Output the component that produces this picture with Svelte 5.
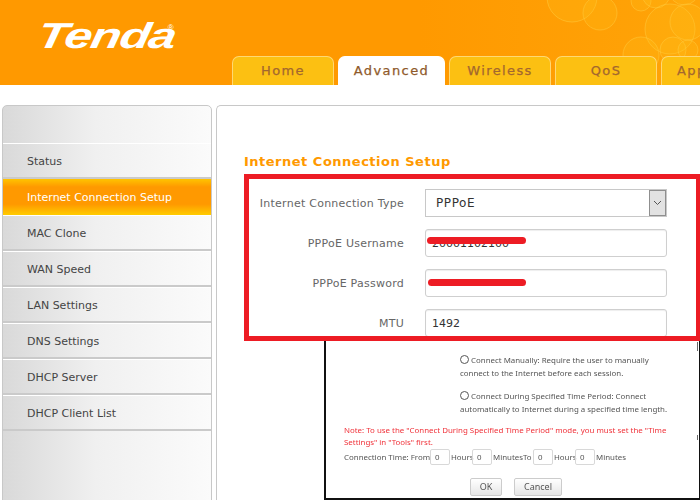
<script>
  const tabs = [
    { name: 'Home' },
    { name: 'Advanced', active: true },
    { name: 'Wireless' },
    { name: 'QoS' },
    { name: 'Application', last: true }
  ];

  const menu = [
    'Status',
    'Internet Connection Setup',
    'MAC Clone',
    'WAN Speed',
    'LAN Settings',
    'DNS Settings',
    'DHCP Server',
    'DHCP Client List'
  ];

  const bubbles = [
    [222, -3, 25],
    [250, 13, 17],
    [291, 1, 10],
    [306, -6, 14],
    [334, -10, 15],
    [320, 29, 25],
    [338, 22, 18],
    [291, 55, 18],
    [323, 50, 13],
    [338, 50, 10]
  ];
</script>

<div class="page">
  <header>
    <div class="logo"><span class="brand">Tenda</span><span class="reg">®</span></div>
    <nav>
      {#each tabs as tab}
        <div class="tab" class:active={tab.active} class:last={tab.last}>{tab.name}</div>
      {/each}
    </nav>
    <svg class="bubbles" width="350" height="85" viewBox="0 0 350 85">
      {#each bubbles as b}
        <circle cx={b[0]} cy={b[1]} r={b[2]} fill="#ffc21a" fill-opacity="0.22" stroke="#ffcb40" stroke-opacity="0.5" />
      {/each}
    </svg>
  </header>

  <div class="main">
    <aside>
      {#each menu as item, i}
        <div class="item" class:current={i === 1}>{item}</div>
      {/each}
    </aside>

    <section>
      <h2>Internet Connection Setup</h2>
      <div class="redbox">
        <div class="row">
          <span class="label">Internet Connection Type</span>
          <div class="select">
            <span class="value">PPPoE</span>
            <span class="arrow">
              <svg width="9" height="6" viewBox="0 0 9 6"><path d="M1 1l3.5 3.5L8 1" fill="none" stroke="#555" stroke-width="1" /></svg>
            </span>
          </div>
        </div>
        <div class="row">
          <span class="label">PPPoE Username</span>
          <div class="field">
            <input value="20001102100" />
            <i class="scribble one"></i>
          </div>
        </div>
        <div class="row">
          <span class="label">PPPoE Password</span>
          <div class="field">
            <input />
            <i class="scribble two"></i>
          </div>
        </div>
        <div class="row">
          <span class="label">MTU</span>
          <div class="field"><input value="1492" /></div>
        </div>
      </div>

      <div class="pasted">
        <div class="blurred">
          <div class="option">
            <p><span class="radio"></span>Connect Manually: Require the user to manually</p>
            <p>connect to the Internet before each session.</p>
          </div>
          <div class="option second">
            <p><span class="radio"></span>Connect During Specified Time Period: Connect</p>
            <p>automatically to Internet during a specified time length.</p>
          </div>
          <div class="note">
            <p>Note: To use the "Connect During Specified Time Period" mode, you must set the "Time</p>
            <p>Settings" in "Tools" first.</p>
          </div>
          <div class="time">
            <span class="t1">Connection Time: From</span><span class="mini">0</span>
            <span class="t2">Hours</span><span class="mini">0</span>
            <span class="t3">MinutesTo</span><span class="mini">0</span>
            <span class="t2">Hours</span><span class="mini">0</span>
            <span class="t4">Minutes</span>
          </div>
          <div class="buttons">
            <span class="btn ok">OK</span>
            <span class="btn cancel">Cancel</span>
          </div>
        </div>
        <i class="tick a"></i>
        <i class="tick b"></i>
      </div>
    </section>
  </div>
</div>

<style>
  :global(body) {
    margin: 0;
    background: #fff;
    overflow: hidden;
  }
  .page {
    width: 700px;
    height: 500px;
    overflow: hidden;
    font-family: "DejaVu Sans", sans-serif;
  }
  header {
    position: relative;
    display: flex;
    height: 85px;
    background: linear-gradient(90deg, #ff9900 60%, #ffa408);
    overflow: hidden;
  }
  .logo {
    width: 198px;
    flex: none;
    padding: 16px 0 0 34px;
    color: #fff;
    display: flex;
    align-items: flex-start;
    white-space: nowrap;
    height: 40px;
  }
  .brand {
    display: inline-block;
    margin-right: 34px;
    font: italic bold 36px/40px "Liberation Sans", sans-serif;
    letter-spacing: -1px;
    transform: scaleX(1.38) skewX(-8deg);
    transform-origin: 0 100%;
  }
  .reg {
    font: 8px/10px "Liberation Sans", sans-serif;
    margin-top: 7px;
  }
  nav {
    display: flex;
    align-self: flex-end;
    gap: 4px;
    position: relative;
    z-index: 1;
  }
  .tab {
    flex: none;
    box-sizing: border-box;
    width: 102px;
    height: 29px;
    border: 1px solid #ffd873;
    border-bottom: 0;
    border-radius: 7px 7px 0 0;
    background: #fcc012;
    color: #a3672f;
    font-size: 13px;
    letter-spacing: 1.4px;
    line-height: 27px;
    text-align: center;
    white-space: nowrap;
    overflow: hidden;
    -webkit-text-stroke: 0.25px;
  }
  .tab.active {
    width: 107px;
    background: #fff;
    border-color: #fff;
    color: #8f5a2b;
  }
  .tab.last {
    padding-left: 15px;
    text-align: left;
  }
  .bubbles {
    position: absolute;
    left: 350px;
    top: 0;
  }
  .main {
    display: flex;
    gap: 4px;
    padding: 20px 0 0 2px;
  }
  aside {
    flex: none;
    box-sizing: border-box;
    width: 210px;
    height: 400px;
    padding-top: 37px;
    border: 1px solid #c8c8c8;
    border-radius: 5px 5px 0 0;
    background: linear-gradient(90deg, #d9d9d9, #f0f0f0 45%, #fbfbfb);
  }
  .item {
    box-sizing: border-box;
    height: 36px;
    padding-left: 24px;
    border-top: 1px solid #fff;
    border-bottom: 2px solid #cacaca;
    color: #444;
    font-size: 11px;
    line-height: 35px;
    white-space: nowrap;
  }
  .item.current {
    border: 0;
    color: #fff;
    line-height: 37px;
    background: linear-gradient(180deg, #ffc400, #ff9900 22%, #ff9900 70%, #ffcc00);
  }
  section {
    flex: 1;
    box-sizing: border-box;
    height: 400px;
    padding: 48px 0 0 27px;
    border: 1px solid #c8c8c8;
    border-right: 0;
    border-radius: 5px 0 0 0;
  }
  h2 {
    margin: 0;
    height: 20px;
    color: #ff9900;
    font-size: 13px;
    font-weight: bold;
    letter-spacing: 0.5px;
    line-height: 15px;
    white-space: nowrap;
  }
  .redbox {
    box-sizing: border-box;
    width: 456px;
    height: 167px;
    padding-top: 10px;
    border: 5px solid #ed1c24;
    border-right-width: 4px;
    display: flex;
    flex-direction: column;
    gap: 12px;
    overflow: hidden;
  }
  .row {
    display: flex;
    align-items: center;
    gap: 21px;
    flex: none;
    height: 28px;
  }
  .label {
    width: 155px;
    flex: none;
    color: #666;
    font-size: 11px;
    letter-spacing: 0.25px;
    text-align: right;
    white-space: nowrap;
  }
  .select, .field {
    position: relative;
    box-sizing: border-box;
    width: 242px;
    height: 28px;
    flex: none;
  }
  .select {
    display: flex;
    align-items: center;
    justify-content: space-between;
    border: 1px solid #c8c8c8;
  }
  .value {
    padding-left: 10px;
    color: #333;
    font-size: 12px;
    letter-spacing: 0.6px;
  }
  .arrow {
    box-sizing: border-box;
    width: 17px;
    height: 26px;
    display: flex;
    align-items: center;
    justify-content: center;
    background: #e2e2e2;
    border: 1px solid #8f8f8f;
  }
  input {
    box-sizing: border-box;
    width: 100%;
    height: 100%;
    padding: 0 6px;
    border: 1px solid #cfcfcf;
    border-radius: 3px;
    outline: 0;
    color: #333;
    font: 11px "DejaVu Sans", sans-serif;
    box-shadow: inset 0 1px 1px #eee;
  }
  .scribble {
    position: absolute;
    height: 7px;
    border-radius: 4px;
    background: #ed1c24;
  }
  .one {
    left: 2px;
    top: 8px;
    width: 99px;
  }
  .two {
    left: 3px;
    top: 10px;
    width: 98px;
  }
  .pasted {
    position: relative;
    box-sizing: border-box;
    width: 376px;
    height: 159px;
    margin-left: 80px;
    border-left: 2px solid #111;
    border-right: 1px solid #111;
    border-bottom: 2px solid #111;
  }
  .blurred {
    padding-top: 13px;
    color: #555;
    font-family: "Noto Sans", sans-serif;
    font-size: 7.9px;
    line-height: 13px;
    white-space: nowrap;
    filter: blur(0.35px);
  }
  .tick {
    position: absolute;
    right: 1px;
    width: 1px;
    background: #666;
  }
  .a {
    top: 1px;
    height: 9px;
  }
  .b {
    top: 94px;
    height: 5px;
  }
  p {
    margin: 0;
  }
  .option {
    margin-left: 134px;
    margin-bottom: 10px;
  }
  .option.second {
    margin-bottom: 8px;
  }
  .radio {
    display: inline-block;
    box-sizing: border-box;
    width: 9px;
    height: 9px;
    margin-right: 2px;
    vertical-align: -1px;
    border: 1px solid #555;
    border-radius: 50%;
  }
  .note {
    margin-left: 18px;
    color: #f0323a;
    line-height: 12px;
  }
  .time {
    display: flex;
    align-items: center;
    height: 16px;
    margin: 1px 0 0 18px;
  }
  .t1, .t2, .t3, .t4 {
    box-sizing: border-box;
    flex: none;
  }
  .t1 { width: 86px; }
  .t2 { width: 22px; padding-left: 1px; }
  .t3 { width: 41px; padding-left: 1px; }
  .t4 { padding-left: 1px; }
  .mini {
    box-sizing: border-box;
    flex: none;
    width: 20px;
    height: 16px;
    padding-left: 4px;
    border: 1px solid #d8d8d8;
    border-radius: 2px;
    line-height: 14px;
  }
  .buttons {
    display: flex;
    gap: 12px;
    margin: 13px 0 0 144px;
  }
  .btn {
    box-sizing: border-box;
    height: 18px;
    border: 1px solid #ccc;
    border-radius: 2px;
    background: linear-gradient(#fff, #e6e6e6);
    font-size: 9px;
    line-height: 16px;
    text-align: center;
  }
  .ok { width: 32px; }
  .cancel { width: 48px; }
</style>
